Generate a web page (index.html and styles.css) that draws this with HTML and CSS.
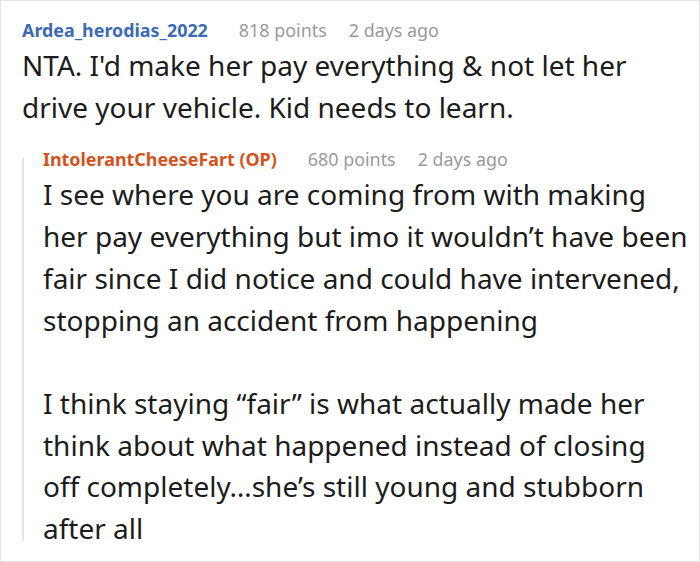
FILE: index.html
```html
<!DOCTYPE html>
<html lang="en">
<head>
<meta charset="utf-8">
<title>Comments</title>
<link rel="stylesheet" href="styles.css">
</head>
<body>
<div class="thread">
  <div class="comment">
    <div class="meta">
      <span class="author">Ardea_herodias_2022</span>
      <span class="points">818 points</span>
      <span class="time">2 days ago</span>
    </div>
    <div class="body">
      <p>NTA. I'd make her pay everything &amp; not let her drive your vehicle. Kid needs to learn.</p>
    </div>
    <div class="reply">
      <div class="meta">
        <span class="author op">IntolerantCheeseFart (OP)</span>
        <span class="points">680 points</span>
        <span class="time">2 days ago</span>
      </div>
      <div class="body">
        <p>I see where you are coming from with making her pay everything but imo it wouldn’t have been fair since I did notice and could have intervened, stopping an accident from happening</p>
        <p class="narrow">I think staying “fair” is what actually made her think about what happened instead of closing off completely…she’s still young and stubborn after all</p>
      </div>
    </div>
  </div>
</div>
</body>
</html>
```
FILE: styles.css
```css
html, body {
  margin: 0;
  padding: 0;
  background: #ffffff;
}
.thread {
  box-sizing: border-box;
  width: 700px;
  height: 562px;
  border: 1px solid #e4e4e4;
  padding: 17px 9.5px 0 21px;
  font-family: "Noto Sans", "Open Sans", sans-serif;
  color: #1c1c1c;
  overflow: hidden;
}
.meta {
  display: flex;
  align-items: baseline;
  font-size: 17.9px;
  line-height: 24px;
  white-space: nowrap;
}
.author {
  font-weight: 700;
  color: #3b6bb7;
  margin-right: 31px;
}
.author.op {
  color: #d5521c;
}
.points {
  color: #9a9a9a;
  margin-right: 22px;
}
.time {
  color: #9a9a9a;
}
.body {
  margin-top: 3px;
  font-size: 28px;
  line-height: 41.7px;
}
.body p {
  margin: 0;
}
.body p + p {
  margin-top: 41.7px;
}
.body .narrow {
  padding-right: 14px;
}
.reply {
  position: relative;
  margin-top: 19px;
  padding-left: 21px;
}
.reply::before {
  content: "";
  position: absolute;
  left: 0;
  top: 11px;
  bottom: 9px;
  width: 2px;
  background: #e6e6e6;
}
```
